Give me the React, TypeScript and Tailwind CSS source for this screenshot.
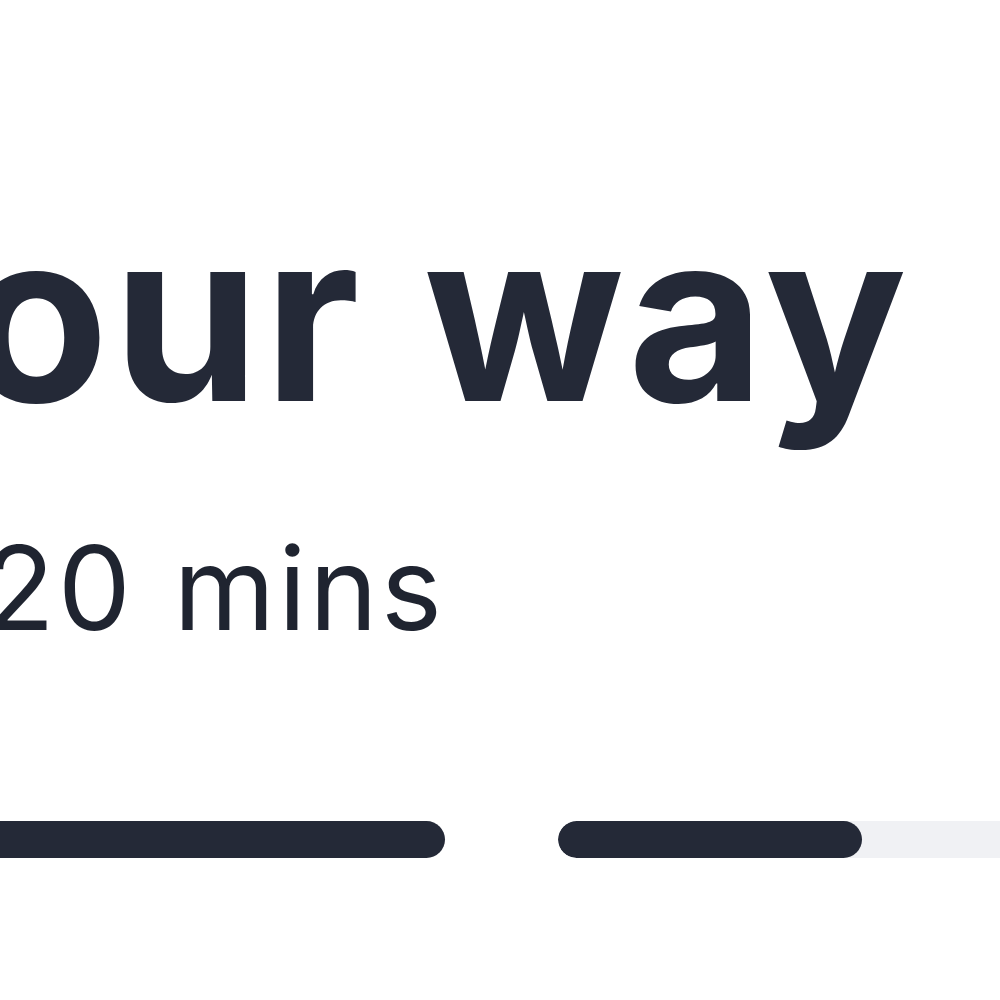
import React from "react";

export default function App() {
  return (
    <div className="w-[1000px] h-[1000px] overflow-hidden bg-white" style={{ fontFamily: "Inter, 'Noto Sans', sans-serif" }}>
      <div className="flex flex-col pt-[197px]">
        <h1 className="ml-[-36px] whitespace-nowrap text-[236px] leading-none font-bold tracking-[4px] text-[#242937]">
          our way
        </h1>
        <p className="ml-[-16px] mt-[97px] whitespace-nowrap text-[116px] leading-none font-normal tracking-[3px] [word-spacing:4px] text-[#1f2430]">
          20 mins
        </p>
        <div className="mt-[175px] flex items-center gap-[113px] ml-[-200px]">
          <div className="h-[37px] w-[645px] shrink-0 rounded-full bg-[#242937]" />
          <div className="h-[37px] w-[645px] shrink-0 rounded-full bg-[#f0f1f4] overflow-hidden">
            <div className="h-full w-[304px] rounded-full bg-[#242937]" />
          </div>
        </div>
      </div>
    </div>
  );
}
